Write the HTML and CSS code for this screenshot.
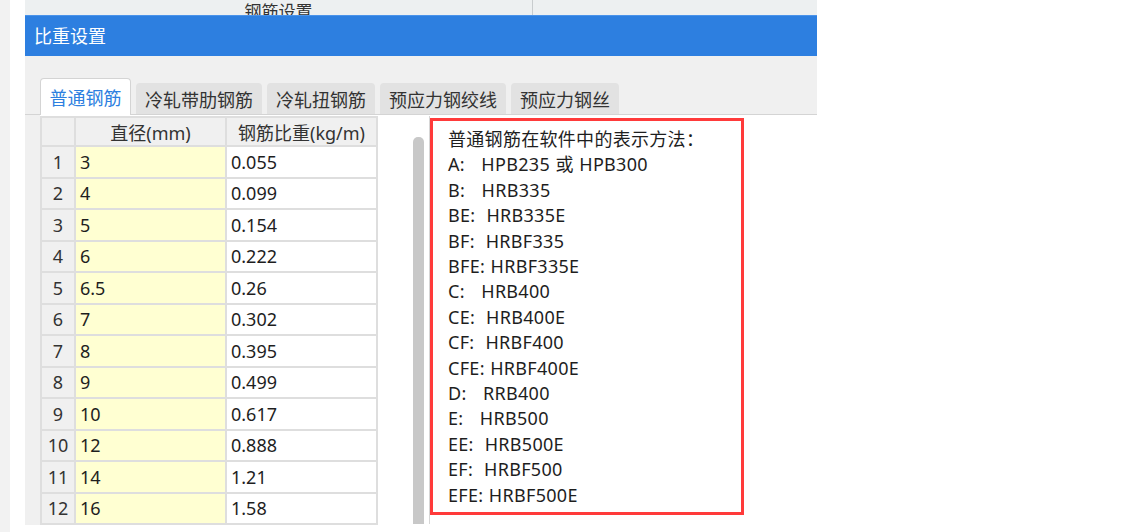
FILE: index.html
```html
<!DOCTYPE html>
<html lang="zh-CN">
<head>
<meta charset="utf-8">
<title>比重设置</title>
<link rel="stylesheet" href="styles.css">
</head>
<body>
<div class="screen">
  <div class="edge"></div>
  <div class="gutter"></div>
  <div class="dialog">
    <div class="topstrip">
      <div class="topcell">钢筋设置</div>
      <div class="topcell2"></div>
    </div>
    <div class="titlebar">比重设置</div>
    <div class="tabbar">
      <div class="tab active">普通钢筋</div>
      <div class="tab">冷轧带肋钢筋</div>
      <div class="tab">冷轧扭钢筋</div>
      <div class="tab">预应力钢绞线</div>
      <div class="tab">预应力钢丝</div>
    </div>
    <div class="pane">
      <div class="grid">
        <div class="hd corner"></div>
        <div class="hd">直径(mm)</div>
        <div class="hd">钢筋比重(kg/m)</div>
        <div class="rn">1</div><div class="dia">3</div><div class="val">0.055</div>
        <div class="rn">2</div><div class="dia">4</div><div class="val">0.099</div>
        <div class="rn">3</div><div class="dia">5</div><div class="val">0.154</div>
        <div class="rn">4</div><div class="dia">6</div><div class="val">0.222</div>
        <div class="rn">5</div><div class="dia">6.5</div><div class="val">0.26</div>
        <div class="rn">6</div><div class="dia">7</div><div class="val">0.302</div>
        <div class="rn">7</div><div class="dia">8</div><div class="val">0.395</div>
        <div class="rn">8</div><div class="dia">9</div><div class="val">0.499</div>
        <div class="rn">9</div><div class="dia">10</div><div class="val">0.617</div>
        <div class="rn">10</div><div class="dia">12</div><div class="val">0.888</div>
        <div class="rn">11</div><div class="dia">14</div><div class="val">1.21</div>
        <div class="rn">12</div><div class="dia">16</div><div class="val">1.58</div>
      </div>
      <div class="scroll"><div class="thumb"></div></div>
      <div class="notes">
        <div class="mark">
<pre class="notetext">普通钢筋在软件中的表示方法<span class="fwcolon">：</span>
A:   HPB235 或 HPB300
B:   HRB335
BE:  HRB335E
BF:  HRBF335
BFE: HRBF335E
C:   HRB400
CE:  HRB400E
CF:  HRBF400
CFE: HRBF400E
D:   RRB400
E:   HRB500
EE:  HRB500E
EF:  HRBF500
EFE: HRBF500E</pre>
        </div>
      </div>
    </div>
  </div>
</div>
</body>
</html>
```

FILE: styles.css
```css
* { box-sizing: border-box; }
html, body {
  margin: 0;
  padding: 0;
  background: #ffffff;
}
body {
  font-family: "Noto Sans", "Noto Sans CJK SC", sans-serif;
  font-size: 18px;
  color: #1e1e1e;
}
.screen {
  display: flex;
  width: 1126px;
  height: 532px;
  overflow: hidden;
}
.edge {
  width: 10px;
  background: #f2f2f2;
}
.gutter {
  width: 15px;
  background: #ffffff;
}
.dialog {
  width: 792px;
  height: 525px;
  display: flex;
  flex-direction: column;
  background: #f0f0f0;
}
.topstrip {
  height: 15px;
  display: flex;
  overflow: hidden;
  background: #edf0f1;
}
.topcell {
  width: 508px;
  border-right: 1px solid #c8ccce;
  text-align: center;
  line-height: 24px;
  font-size: 17px;
  color: #333;
}
.topcell2 { flex: 1; }
.titlebar {
  height: 41px;
  display: flex;
  align-items: center;
  padding-left: 9px;
  padding-bottom: 2px;
  background: #2d7fe0;
  border-top: 1px solid #4a93ea;
  color: #ffffff;
  font-size: 18px;
}
.tabbar {
  height: 59px;
  display: flex;
  align-items: flex-end;
  gap: 5px;
  padding-left: 15px;
  border-bottom: 1px solid #d4d4d4;
}
.tab {
  height: 31px;
  padding: 0 9px;
  display: flex;
  align-items: center;
  background: #e2e2e2;
  border-radius: 4px 4px 0 0;
  color: #333;
  font-size: 18px;
  white-space: nowrap;
}
.tab.active {
  height: 37px;
  margin-bottom: -1px;
  padding: 0 8.5px;
  background: #ffffff;
  border: 1px solid #d4d4d4;
  border-bottom: none;
  color: #2d7fe0;
}
.pane {
  flex: 1;
  margin-left: 15px;
  display: flex;
  align-items: flex-start;
  background: #ffffff;
  padding-top: 1px;
}
.grid {
  width: 338px;
  display: grid;
  grid-template-columns: 32px 149px 149px;
  grid-template-rows: 27px repeat(12, 29.5px);
  gap: 2px;
  padding: 2px;
  background: #dedede;
}
.grid > div {
  display: flex;
  align-items: center;
  white-space: nowrap;
}
.hd {
  background: #f0f0f0;
  justify-content: center;
  color: #333;
}
.rn {
  background: #f0f0f0;
  justify-content: center;
  color: #333;
}
.dia {
  background: #ffffd2;
  padding-left: 4px;
}
.val {
  background: #ffffff;
  padding-left: 4px;
}
.scroll {
  margin-left: 35px;
  width: 11px;
  height: 408px;
  padding-top: 21px;
}
.thumb {
  height: 100%;
  background: #c8c8c8;
  border-radius: 5px 5px 0 0;
}
.notes {
  margin-left: 5px;
  flex: 1;
  height: 408px;
  border-left: 1px solid #d6d6d6;
}
.mark {
  width: 314px;
  height: 397px;
  margin-top: 2px;
  border: 3px solid #ff3a3a;
  padding: 5px 0 0 15px;
}
.notetext {
  margin: 0;
  font-family: "Noto Sans", "Noto Sans CJK SC", sans-serif;
  font-size: 18px;
  line-height: 25.4px;
  letter-spacing: 0.3px;
  word-spacing: 0.5px;
  color: #1e1e1e;
  white-space: pre;
}
.fwcolon {
  font-family: "Noto Sans CJK JP", sans-serif;
}
```
